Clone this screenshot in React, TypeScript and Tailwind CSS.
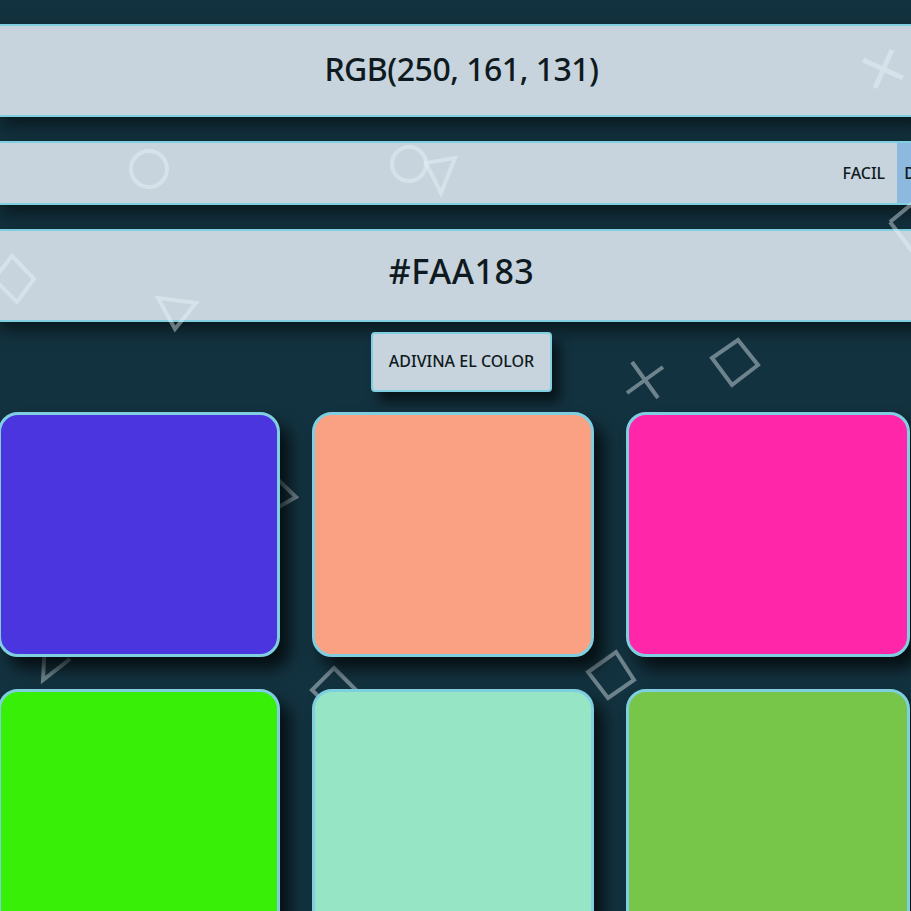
import React from 'react';

const cards = ['#4b35de', '#faa183', '#ff26aa', '#37ef07', '#96e6c6', '#77c64a'];

function Shapes() {
  // faint background figures, drawn above the bars and below the cards
  return (
    <svg
      className="absolute inset-0 z-10 pointer-events-none"
      width="911"
      height="911"
      viewBox="0 0 911 911"
      fill="none"
      stroke="rgba(235,245,250,0.42)"
      strokeWidth="4"
      strokeLinejoin="miter"
    >
      <path d="M892 50 L875 88 M863 60 L903 78" strokeWidth="5" />
      <circle cx="149" cy="169" r="18" />
      <circle cx="409" cy="164" r="17" />
      <path d="M426 163 L455 158 L441 193 Z" />
      <path d="M12 256 L34 279 L17 302 L-6 279 Z" />
      <path d="M158 298 L196 303 L175 329 Z" />
      <path d="M890 222 L913 203 M890 222 L913 252" />
      <path d="M632 362 L658 398 M627 393 L663 367" />
      <path d="M738 340 L758 365 L732 385 L712 358 Z" />
      <path d="M268 470 L296 497 L270 512 Z" />
      <path d="M47 600 L43 680 L70 659" />
      <path d="M334 668 L356 690 L334 712 L312 690 Z" />
      <path d="M616 652 L634 680 L608 698 L588 672 Z" />
    </svg>
  );
}

export default function App() {
  return (
    <div
      className="relative w-full h-[911px] overflow-hidden bg-[#13323f] text-[#0f1a20]"
      style={{ fontFamily: '"Noto Sans", "Open Sans", sans-serif' }}
    >
      <Shapes />

      <div className="w-[923px] flex flex-col pt-6">
        {/* RGB bar */}
        <div className="h-[93px] pb-1 flex items-center justify-center bg-[#c7d4dd] border-y-2 border-[#80cfe0] shadow-[0_8px_16px_rgba(0,0,0,0.55)]">
          <h1 className="text-[32px] font-medium tracking-[-0.5px]">RGB(250, 161, 131)</h1>
        </div>

        {/* difficulty bar */}
        <div className="mt-6 h-16 flex justify-end overflow-hidden bg-[#c7d4dd] border-y-2 border-[#80cfe0] shadow-[0_8px_16px_rgba(0,0,0,0.55)]">
          <nav className="flex mr-[-44px] text-[16px] font-medium">
            <button className="px-3 h-full">FACIL</button>
            <button className="px-[7px] h-full bg-[#8cb9dd]">DIFICIL</button>
          </nav>
        </div>

        {/* hex bar */}
        <div className="mt-6 h-[93px] pb-2 flex items-center justify-center bg-[#c7d4dd] border-y-2 border-[#80cfe0] shadow-[0_8px_16px_rgba(0,0,0,0.55)]">
          <h2 className="text-[34px] font-medium tracking-[0.5px]">#FAA183</h2>
        </div>

        <div className="mt-[10px] flex justify-center">
          <button className="relative z-20 w-[181px] h-[60px] pb-0.5 bg-[#c7d4dd] border-2 border-[#80cfe0] rounded text-[16px] font-medium shadow-[8px_10px_12px_rgba(0,0,0,0.6)]">
            ADIVINA EL COLOR
          </button>
        </div>
      </div>

      {/* color cards */}
      <div className="relative z-20 mt-5 ml-[-2px] grid grid-cols-[282px_282px_284px] gap-x-8 gap-y-8">
        {cards.map((c) => (
          <div
            key={c}
            className="h-[245px] rounded-[20px] border-[3px] border-[#80cfe0] shadow-[10px_12px_16px_rgba(0,0,0,0.7)]"
            style={{ backgroundColor: c }}
          />
        ))}
      </div>
    </div>
  );
}
